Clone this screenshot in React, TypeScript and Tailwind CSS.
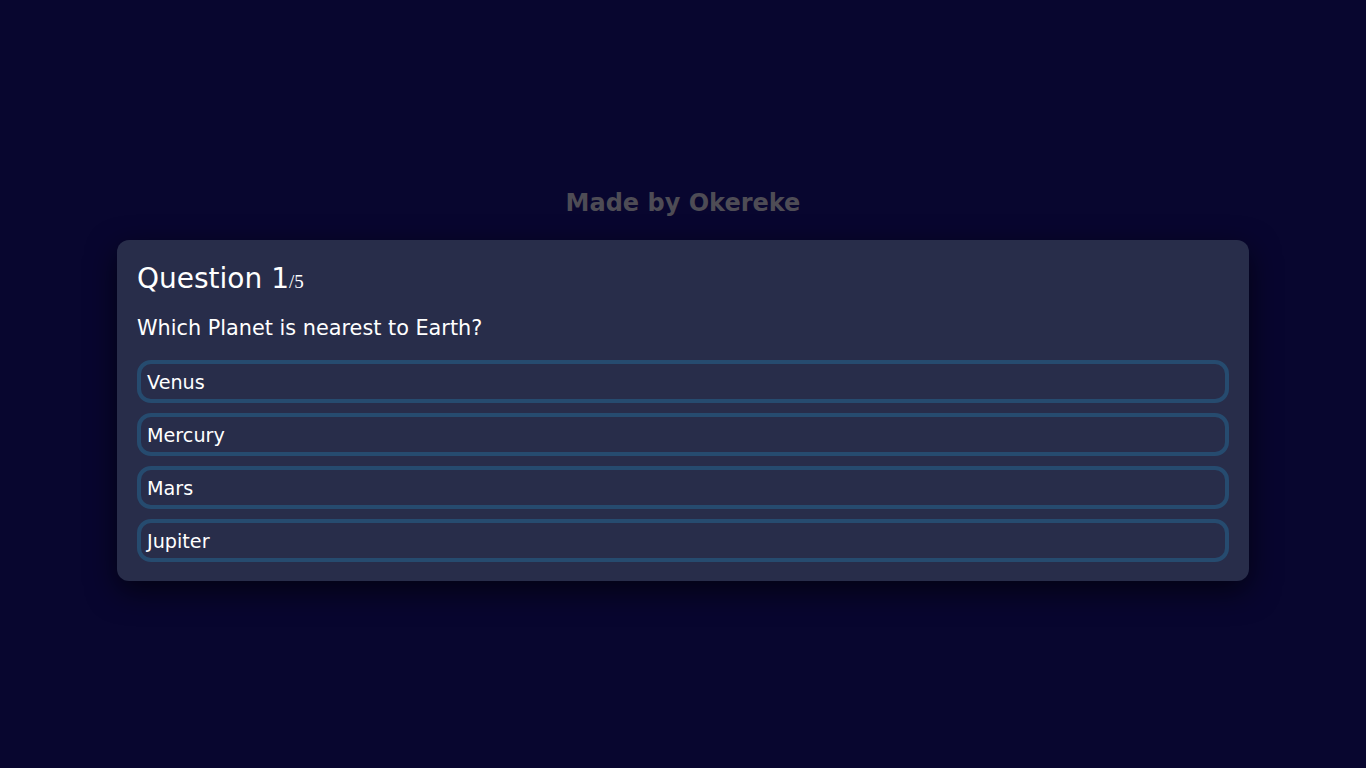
import React from "react";

export default function App() {
  const options = ["Venus", "Mercury", "Mars", "Jupiter"];
  return (
    <div
      className="w-full h-[768px] bg-[#08062f] flex flex-col items-center justify-center"
      style={{ fontFamily: '"DejaVu Sans", Verdana, sans-serif' }}
    >
      <div className="flex flex-col items-center w-full">
        <h2 className="text-[24px] font-bold text-[#4e4c55] leading-[32px] mb-[21px]">Made by Okereke</h2>
        <div className="w-[1132px] bg-[#282d4a] rounded-[12px] pt-[20px] px-[20px] pb-[19px] shadow-[0_10px_30px_rgba(0,0,0,0.6)]">
          <div className="text-white text-[28px] leading-[36px] h-[36px] pt-[1px]">
            Question 1
            <span
              className="text-[19px] leading-none"
              style={{ fontFamily: '"Liberation Serif", "Times New Roman", serif' }}
            >
              /5
            </span>
          </div>
          <div className="text-white text-[20.8px] leading-[25px] h-[25px] mt-[20px] mb-[19px]">
            Which Planet is nearest to Earth?
          </div>
          <div className="flex flex-col gap-[10px]">
            {options.map((o) => (
              <button
                key={o}
                className="w-full h-[43px] text-left text-white text-[19.2px] bg-[#282d4a] border-[4px] border-[#264b6f] rounded-[14px] px-[6px] pt-[4px] pb-0"
                style={{ fontFamily: '"DejaVu Sans", Verdana, sans-serif' }}
              >
                {o}
              </button>
            ))}
          </div>
        </div>
      </div>
    </div>
  );
}
